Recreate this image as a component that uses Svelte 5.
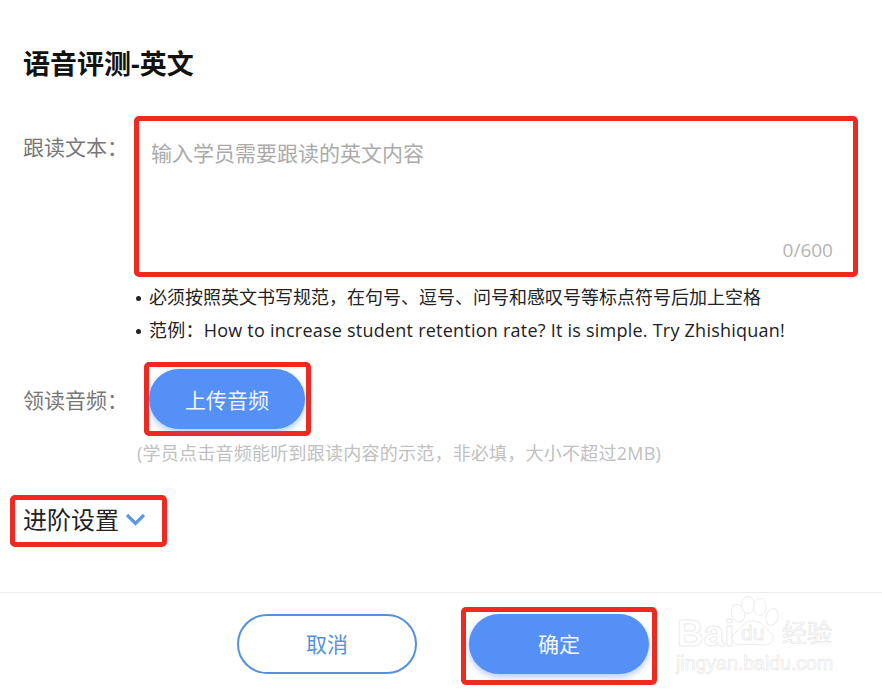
<script>
    let text = $state('');
    let advancedOpen = $state(false);
</script>

<style>
    :global(body) {
        background: #fff;
    }

    .page {
        position: relative;
        width: 882px;
        height: 690px;
        overflow: hidden;
        font-family: "Open Sans", "Noto Sans CJK SC", sans-serif;
        color: #222;
    }

    h1 {
        margin: 0;
        padding: 47px 0 0 23px;
        font-size: 27px;
        line-height: 34px;
        font-weight: 700;
        color: #111;
    }

    .mark {
        box-sizing: border-box;
        border: 5px solid #ee2a20;
        border-radius: 5px;
    }

    .row {
        display: flex;
        align-items: flex-start;
        padding-left: 23px;
    }

    .label {
        flex: none;
        width: 111px;
        font-size: 21px;
        color: #777;
        line-height: 30px;
    }

    .text-row {
        margin-top: 35px;
    }

    .text-row .label {
        padding-top: 16px;
    }

    .text-box {
        position: relative;
        width: 724px;
        height: 161px;
    }

    textarea {
        display: block;
        box-sizing: border-box;
        width: 100%;
        height: 100%;
        border: none;
        outline: none;
        resize: none;
        padding: 17px 12px;
        background: transparent;
        font-family: inherit;
        font-size: 21px;
        line-height: 30px;
    }

    textarea::placeholder {
        color: #aaa;
    }

    .count {
        position: absolute;
        right: 20px;
        bottom: 10px;
        font-size: 19px;
        line-height: 24px;
        color: #b4b4b4;
    }

    .rules {
        margin: 4px 0 0 136px;
        padding: 0;
        list-style: none;
        font-size: 18px;
        line-height: 33px;
        color: #222;
    }

    .rules li {
        display: flex;
        gap: 8px;
    }

    .rules li::before {
        content: "";
        flex: none;
        width: 5px;
        height: 5px;
        margin-top: 15px;
        border-radius: 50%;
        background: #222;
    }

    .sample {
        letter-spacing: 0.23px;
    }

    .audio-row {
        margin-top: 15px;
        align-items: center;
    }

    .audio-row .label {
        padding-top: 2px;
    }

    .upload-mark {
        margin-left: 10px;
        padding: 2px 1px 1px 0;
        width: 167px;
        height: 74px;
    }

    .pill {
        display: block;
        box-sizing: border-box;
        width: 180px;
        height: 60px;
        border-radius: 30px;
        border: none;
        padding: 0 0 2px;
        font-family: inherit;
        font-size: 21px;
        cursor: pointer;
    }

    .primary {
        background: #5590f6;
        color: #f2f6ff;
        box-shadow: 0 3px 6px rgba(70, 120, 240, 0.4);
    }

    .upload {
        width: 156px;
        padding: 0;
    }

    .note {
        margin: 3px 0 0 137px;
        font-size: 18px;
        line-height: 28px;
        letter-spacing: 0.24px;
        color: #c0c0c0;
    }

    .advanced {
        display: flex;
        align-items: center;
        gap: 6px;
        box-sizing: border-box;
        width: 157px;
        height: 52px;
        margin: 28px 0 0 10px;
        padding: 0 0 6px 8px;
        background: none;
        font-family: inherit;
        font-size: 24px;
        color: #222;
        cursor: pointer;
    }

    .advanced svg {
        display: block;
        margin-top: 2px;
    }

    .footer {
        display: flex;
        margin-top: 45px;
        border-top: 1px solid #ececec;
        padding: 14px 0 0 237px;
    }

    .cancel {
        background: #fff;
        border: 2px solid #5590dc;
        color: #5590dc;
        margin-top: 7px;
    }

    .confirm-mark {
        margin-left: 44px;
        width: 196px;
        height: 78px;
        padding: 2px 0 0 3px;
    }

    .watermark {
        position: absolute;
        left: 676px;
        top: 594px;
        width: 160px;
        height: 84px;
        pointer-events: none;
        color: #fff;
        -webkit-text-stroke: 1px #ececec;
        font-family: "Liberation Sans", sans-serif;
    }

    .watermark span {
        position: absolute;
        white-space: nowrap;
    }

    .bai {
        left: 1px;
        top: 20px;
        font-size: 37px;
        line-height: 40px;
        font-weight: 700;
    }

    .du {
        left: 65px;
        top: 28px;
        font-size: 21px;
        line-height: 22px;
    }

    .jy {
        left: 106px;
        top: 20px;
        font-size: 25px;
        line-height: 34px;
        font-family: "Noto Sans CJK SC", sans-serif;
        -webkit-text-stroke: 0.7px #e6e6e6;
    }

    .site {
        left: 0;
        top: 57px;
        font-size: 19.5px;
        line-height: 24px;
        -webkit-text-stroke: 0.6px #e6e6e6;
    }

    .paw {
        position: absolute;
        left: 0;
        top: 0;
    }
</style>

<div class="page">
    <h1>语音评测-英文</h1>

    <div class="row text-row">
        <div class="label">跟读文本：</div>
        <div class="text-box mark">
            <textarea bind:value={text} placeholder="输入学员需要跟读的英文内容" maxlength="600"></textarea>
            <span class="count">{text.length}/600</span>
        </div>
    </div>

    <ul class="rules">
        <li>必须按照英文书写规范，在句号、逗号、问号和感叹号等标点符号后加上空格</li>
        <li><span class="sample">范例：How to increase student retention rate? It is simple. Try Zhishiquan!</span></li>
    </ul>

    <div class="row audio-row">
        <div class="label">领读音频：</div>
        <div class="upload-mark mark">
            <button class="pill primary upload">上传音频</button>
        </div>
    </div>

    <p class="note">(学员点击音频能听到跟读内容的示范，非必填，大小不超过2MB)</p>

    <button class="advanced mark" onclick={() => (advancedOpen = !advancedOpen)}>
        进阶设置
        <svg width="21" height="13" viewBox="0 0 21 13">
            <path d="M2 2 L10.5 10.5 L19 2" fill="none" stroke="#5b98e6" stroke-width="3.2" />
        </svg>
    </button>

    <div class="footer">
        <button class="pill cancel">取消</button>
        <div class="confirm-mark mark">
            <button class="pill primary">确定</button>
        </div>
    </div>

    <div class="watermark">
        <svg class="paw" width="160" height="60" viewBox="0 0 160 60" fill="#fff" stroke="#ececec" stroke-width="1">
            <ellipse cx="62" cy="19" rx="6.5" ry="9" transform="rotate(-20 62 19)" />
            <ellipse cx="72" cy="11" rx="6.5" ry="8.5" />
            <ellipse cx="84" cy="13" rx="6.5" ry="8.5" />
            <ellipse cx="96" cy="23" rx="6" ry="8.5" transform="rotate(15 96 23)" />
            <path d="M77 27 C86 27 87 33 94 38 C101 44 96 52 87 51 C81 50 72 50 66 51 C57 52 53 44 60 38 C67 33 68 27 77 27 Z" />
        </svg>
        <span class="bai">Bai</span>
        <span class="du">du</span>
        <span class="jy">经验</span>
        <span class="site">jingyan.baidu.com</span>
    </div>
</div>
